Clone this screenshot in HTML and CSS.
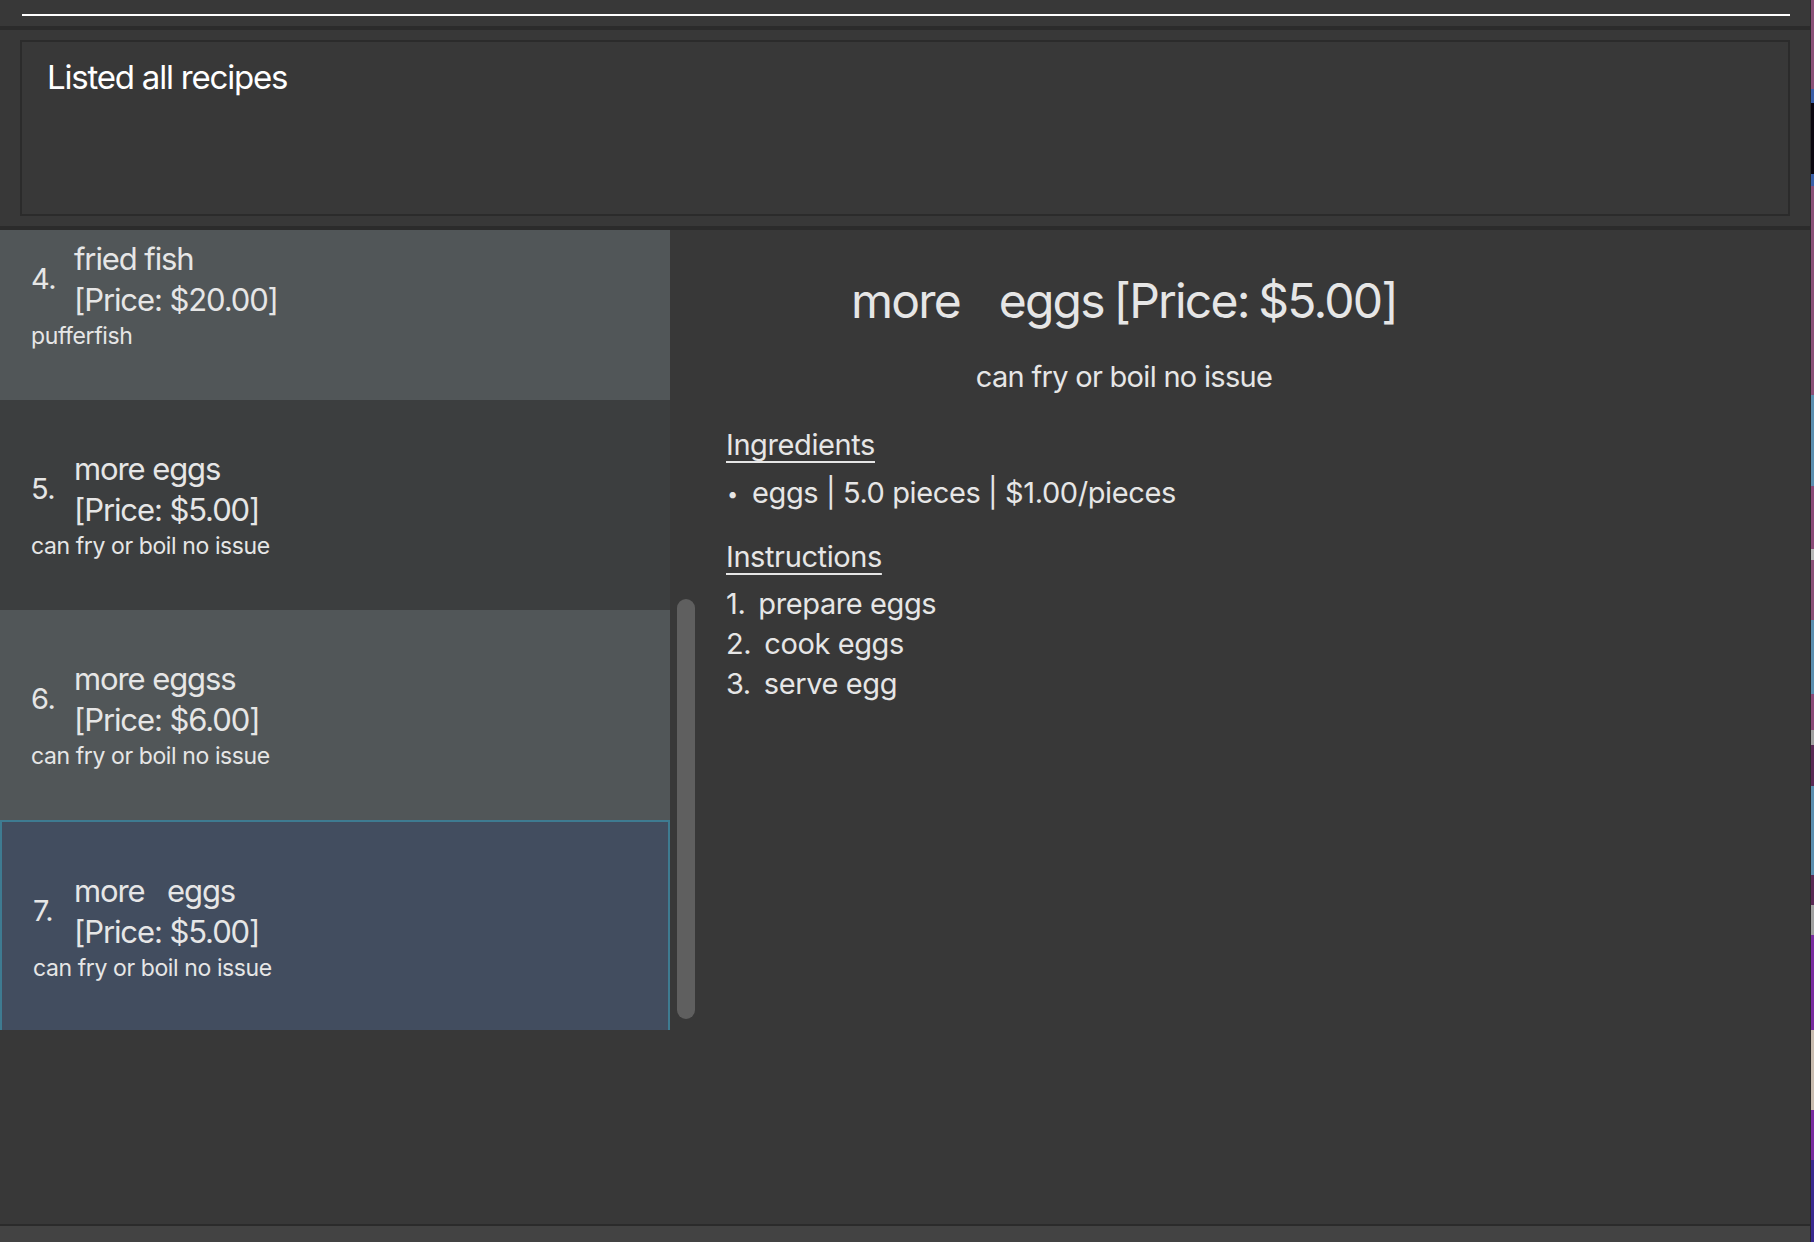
FILE: index.html
```html
<!DOCTYPE html>
<html lang="en">
<head>
<meta charset="utf-8">
<title>Recipe Book</title>
<link rel="stylesheet" href="styles.css">
</head>
<body>
<div class="window">
  <div class="app">
    <div class="command-bar"><div class="command-input"></div></div>
    <div class="sep"></div>
    <div class="result-pane">
      <div class="result-box">Listed all recipes</div>
    </div>
    <div class="sep"></div>
    <div class="main">
      <div class="list-pane">
        <div class="list-viewport">
          <div class="list-content">
            <div class="cell even">
              <div class="cell-head">
                <span class="num">4.</span>
                <div class="name-lines"><div>fried fish</div><div>[Price: $20.00]</div></div>
              </div>
              <div class="desc">pufferfish</div>
            </div>
            <div class="cell odd">
              <div class="cell-head">
                <span class="num">5.</span>
                <div class="name-lines"><div>more eggs</div><div>[Price: $5.00]</div></div>
              </div>
              <div class="desc">can fry or boil no issue</div>
            </div>
            <div class="cell even">
              <div class="cell-head">
                <span class="num">6.</span>
                <div class="name-lines"><div>more eggss</div><div>[Price: $6.00]</div></div>
              </div>
              <div class="desc">can fry or boil no issue</div>
            </div>
            <div class="cell selected">
              <div class="cell-head">
                <span class="num">7.</span>
                <div class="name-lines"><div class="pre">more    eggs</div><div>[Price: $5.00]</div></div>
              </div>
              <div class="desc">can fry or boil no issue</div>
            </div>
          </div>
        </div>
        <div class="scroll-track"><div class="scroll-thumb"></div></div>
      </div>
      <div class="detail">
        <div class="detail-header">
          <div class="detail-title pre">more    eggs [Price: $5.00]</div>
          <div class="detail-desc">can fry or boil no issue</div>
        </div>
        <div class="section-title ingredients-title">Ingredients</div>
        <ul class="ingredients">
          <li>eggs | 5.0 pieces | $1.00/pieces</li>
        </ul>
        <div class="section-title instructions-title">Instructions</div>
        <ol class="steps">
          <li><span class="step-no">1.</span>prepare eggs</li>
          <li><span class="step-no">2.</span>cook eggs</li>
          <li><span class="step-no">3.</span>serve egg</li>
        </ol>
      </div>
    </div>
    <div class="sep thin"></div>
    <div class="status"></div>
  </div>
  <div class="window-edge"></div>
  <div class="desktop-strip"></div>
</div>
</body>
</html>
```

FILE: styles.css
```css
html, body {
  margin: 0;
  padding: 0;
  background: #383838;
}

body {
  font-family: Inter, "Noto Sans", sans-serif;
  color: #e6e6e6;
  width: 1814px;
  height: 1242px;
  overflow: hidden;
}

.window {
  display: flex;
  height: 1242px;
}

.app {
  width: 1810px;
  display: flex;
  flex-direction: column;
  background: #383838;
}

.window-edge {
  width: 1px;
  background: #2a2a2a;
}

.desktop-strip {
  width: 3px;
  background: linear-gradient(to bottom,
    #8a5078 0px, #8a5078 89px,
    #3a5fa8 89px, #3a5fa8 103px,
    #0c0610 103px, #0c0610 174px,
    #3a5fa8 174px, #3a5fa8 186px,
    #8a5078 186px, #8a5078 395px,
    #5b8fb0 395px, #5b8fb0 486px,
    #8a4a78 486px, #8a4a78 549px,
    #b8b8b8 549px, #b8b8b8 560px,
    #8a5078 560px, #8a5078 620px,
    #5b8fb0 620px, #5b8fb0 694px,
    #8a4a78 694px, #8a4a78 730px,
    #a0a0a0 730px, #a0a0a0 745px,
    #5a2a55 745px, #5a2a55 786px,
    #5b8fb0 786px, #5b8fb0 875px,
    #5a2a55 875px, #5a2a55 905px,
    #a0a0a0 905px, #a0a0a0 935px,
    #7a2ca0 935px, #7a2ca0 1030px,
    #c8bcb0 1030px, #c8bcb0 1110px,
    #7a2ca0 1110px, #7a2ca0 1160px,
    #3a2a90 1160px, #3a2a90 1242px);
}

/* command bar */
.command-bar {
  height: 26px;
  padding: 14px 20px 0 22px;
  box-sizing: border-box;
}

.command-input {
  height: 0;
  border-bottom: 2px solid #ffffff;
}

.sep {
  height: 4px;
  background: #2b2b2b;
}

.sep.thin {
  height: 2px;
}

/* result display */
.result-pane {
  height: 196px;
  padding: 10px 20px 10px 20px;
  box-sizing: border-box;
}

.result-box {
  height: 100%;
  box-sizing: border-box;
  border: 2px solid #2b2b2b;
  padding: 14px 25px;
  font-size: 33px;
  line-height: 42px;
  color: #ffffff;
  letter-spacing: -1.2px;
}

/* main */
.main {
  height: 994px;
  display: flex;
}

.list-pane {
  width: 700px;
  display: flex;
  align-items: flex-start;
}

.list-viewport {
  width: 670px;
  height: 800px;
  overflow: hidden;
}

.list-content {
  margin-top: -40px;
}

.cell {
  height: 210px;
  box-sizing: border-box;
  padding-left: 31px;
  display: flex;
  flex-direction: column;
  justify-content: center;
}

.cell.even { background: #515658; }
.cell.odd { background: #3c3e3f; }
.cell.selected {
  background: #424d5f;
  border: 2px solid #3e7b91;
  height: 214px;
  padding-left: 31px;
}

.cell-head {
  display: flex;
  align-items: center;
}

.num {
  width: 43px;
  font-size: 29px;
  line-height: 32px;
  letter-spacing: -0.5px;
}

.cell.selected .num {
  width: 41px;
}

.name-lines {
  font-size: 31px;
  line-height: 41px;
  letter-spacing: -1.1px;
}

.pre {
  white-space: pre;
  word-spacing: -2px;
}

.desc {
  font-size: 23px;
  line-height: 32px;
  letter-spacing: -0.4px;
}

.scroll-track {
  width: 30px;
  height: 800px;
  display: flex;
  flex-direction: column;
}

.scroll-thumb {
  margin-top: 369px;
  margin-left: 7px;
  width: 18px;
  height: 420px;
  border-radius: 9px;
  background: #5f5f5f;
}

/* detail */
.detail {
  flex: 1;
  padding-left: 26px;
  padding-top: 41px;
  font-size: 29px;
  letter-spacing: -0.4px;
}

.detail-header {
  width: 796px;
  text-align: center;
}

.detail-title {
  font-size: 48px;
  line-height: 60px;
  letter-spacing: -1.8px;
}

.detail-desc {
  font-size: 29px;
  line-height: 36px;
  margin-top: 28px;
  letter-spacing: -0.7px;
}

.section-title {
  display: block;
  width: max-content;
  font-size: 29px;
  line-height: 36px;
  text-decoration: underline;
  text-underline-offset: 6px;
  text-decoration-thickness: 2px;
}

.ingredients-title { margin-top: 32px; }
.instructions-title { margin-top: 25px; }

.ingredients {
  list-style: none;
  margin: 10px 0 0 0;
  padding: 0;
  line-height: 40px;
}

.ingredients li::before {
  content: "•";
  display: inline-block;
  width: 26px;
  padding-left: 1px;
  box-sizing: border-box;
  font-size: 20px;
  vertical-align: 2px;
}

.steps {
  list-style: none;
  margin: 9px 0 0 0;
  padding: 0;
  line-height: 40px;
}

.step-no {
  margin-right: 13px;
}

.status {
  height: 16px;
  background: #434343;
}
```
